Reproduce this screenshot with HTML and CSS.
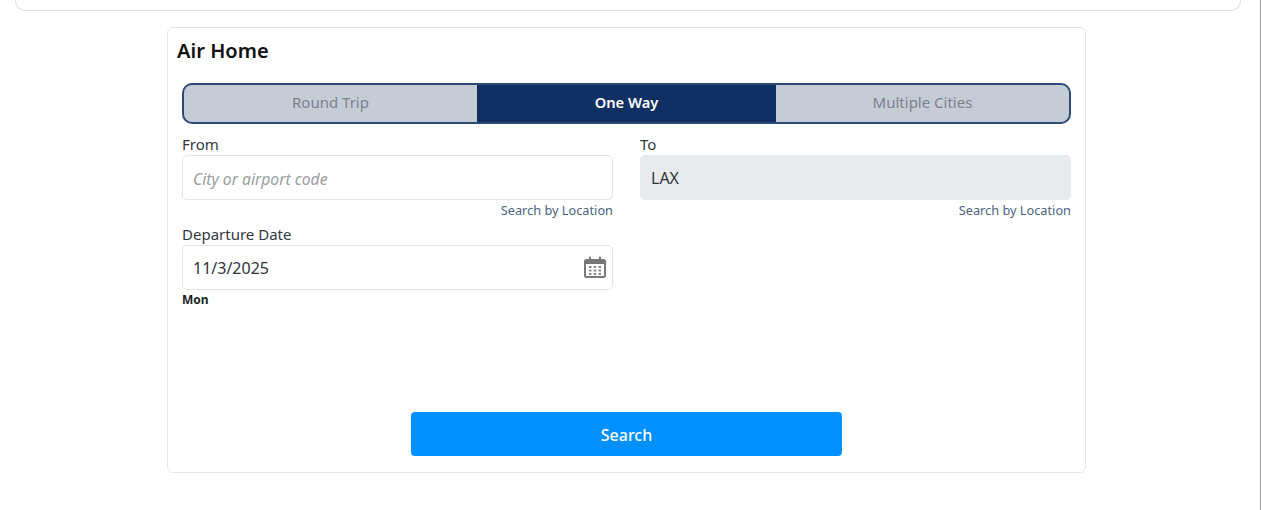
FILE: index.html
```html
<!DOCTYPE html>
<html lang="en">
<head>
    <meta charset="UTF-8">
    <title>Air Home</title>
    <link rel="stylesheet" href="styles.css">
</head>
<body>
    <div class="page">
        <div class="top-card"></div>
        <div class="air-card">
            <h1>Air Home</h1>
            <div class="form-body">
                <div class="trip-tabs">
                    <a class="trip-tab tab-round">Round Trip</a>
                    <a class="trip-tab tab-oneway active">One Way</a>
                    <a class="trip-tab tab-multi">Multiple Cities</a>
                </div>
                <div class="field-row">
                    <div class="field">
                        <label>From</label>
                        <div class="input placeholder">City or airport code</div>
                        <a class="location-link">Search by Location</a>
                    </div>
                    <div class="field">
                        <label>To</label>
                        <div class="input disabled">LAX</div>
                        <a class="location-link">Search by Location</a>
                    </div>
                </div>
                <div class="field-row date-row">
                    <div class="field">
                        <label>Departure Date</label>
                        <div class="input date-input">
                            <span>11/3/2025</span>
                            <svg class="cal-icon" width="24" height="24" viewBox="0 0 24 24">
                                <path fill="#777" d="M3.5 4H6V2.5a1 1 0 0 1 2 0V4h8V2.5a1 1 0 0 1 2 0V4h2.500A2.500 2.500 0 0 1 23 6.500v14a2.500 2.500 0 0 1-2.500 2.500h-17A2.500 2.500 0 0 1 1 20.500v-14A2.500 2.500 0 0 1 3.500 4zM3 9v11.500a.5.500 0 0 0 .5.500h17a.5.500 0 0 0 .5-.500V9z"/>
                                <g fill="#888">
                                    <rect x="6" y="11" width="2.500" height="2"/>
                                    <rect x="10.750" y="11" width="2.500" height="2"/>
                                    <rect x="15.500" y="11" width="2.500" height="2"/>
                                    <rect x="6" y="14.500" width="2.500" height="2"/>
                                    <rect x="10.750" y="14.500" width="2.500" height="2"/>
                                    <rect x="15.500" y="14.500" width="2.500" height="2"/>
                                    <rect x="6" y="18" width="2.500" height="2"/>
                                    <rect x="10.750" y="18" width="2.500" height="2"/>
                                    <rect x="15.500" y="18" width="2.500" height="2"/>
                                </g>
                            </svg>
                        </div>
                        <div class="day-name">Mon</div>
                    </div>
                    <div class="field"></div>
                </div>
                <div class="actions">
                    <button class="search-btn">Search</button>
                </div>
            </div>
        </div>
    </div>
</body>
</html>
```

FILE: styles.css
```css
* {
    margin: 0;
    padding: 0;
    box-sizing: border-box;
}

html, body {
    height: 510px;
    overflow: hidden;
}

body {
    font-family: "Noto Sans", Arial, sans-serif;
    background-color: #fff;
    color: #212529;
}

.page {
    height: 510px;
    width: 1261px;
    border-right: 1px solid #9a9a9a;
}

.top-card {
    height: 11px;
    width: 1226px;
    margin-left: 15px;
    border: 1px solid #dfe1e3;
    border-top: 0;
    border-radius: 0 0 10px 10px;
}

.air-card {
    width: 919px;
    height: 446px;
    margin: 16px 0 0 167px;
    padding: 9px 14px 0 9px;
    border: 1px solid #e4e6e8;
    border-radius: 6px;
}

h1 {
    font-size: 20px;
    line-height: 28px;
    font-weight: 600;
    letter-spacing: 0.05px;
    color: #111;
}

.form-body {
    margin: 18px 0 0 5px;
}

.trip-tabs {
    display: grid;
    grid-template-columns: 293px 299px 1fr;
    height: 41px;
    border: 2px solid #2c4a78;
    border-radius: 10px;
    overflow: hidden;
    background-color: #c6ccd6;
}

.trip-tab {
    display: flex;
    align-items: center;
    justify-content: center;
    padding-bottom: 4px;
    font-size: 15px;
    color: #7b828e;
}

.trip-tab.active {
    background-color: #103063;
    color: #fff;
    font-size: 14.700px;
    font-weight: 600;
}

.field-row {
    display: grid;
    grid-template-columns: 431px 431px;
    gap: 27px;
    margin-top: 10px;
}

.date-row {
    margin-top: 4px;
}

.field {
    display: flex;
    flex-direction: column;
}

label {
    font-size: 15px;
    line-height: 21px;
    color: #33383f;
}

.input {
    display: flex;
    align-items: center;
    height: 45px;
    padding: 0 10px;
    font-size: 16px;
    color: #2f3338;
    border: 1px solid #e2e4e7;
    border-radius: 5px;
    background-color: #fff;
}

.input.placeholder {
    padding-top: 2px;
    color: #9a9da1;
    font-style: italic;
    font-size: 15.700px;
}

.input.disabled {
    background-color: #e8ebee;
    border-color: #e8ebee;
}

.date-input {
    justify-content: space-between;
    padding-right: 5px;
}

.cal-icon {
    margin-top: -2px;
}

.location-link {
    align-self: flex-end;
    font-size: 12.750px;
    line-height: 20px;
    color: #4a6484;
}

.day-name {
    margin-top: 1px;
    font-size: 12px;
    line-height: 18px;
    font-weight: 700;
    color: #1d1f22;
}

.actions {
    display: flex;
    justify-content: center;
    margin-top: 103px;
}

.search-btn {
    width: 431px;
    height: 44px;
    padding-top: 2px;
    border: 0;
    border-radius: 4px;
    background-color: #0090ff;
    color: #fff;
    font-family: inherit;
    font-size: 16px;
    font-weight: 500;
}
```
